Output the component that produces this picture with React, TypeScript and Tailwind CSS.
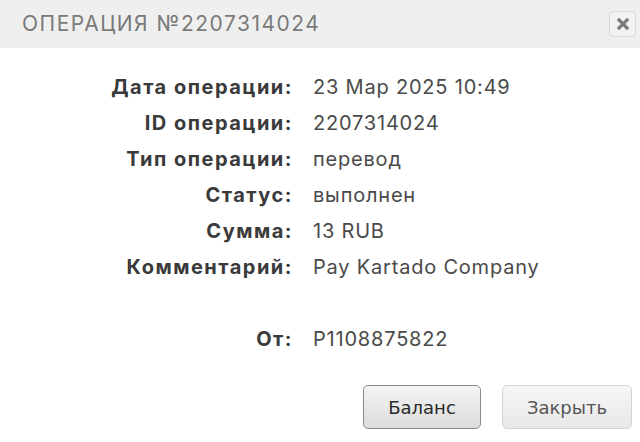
import React from "react";

const rows: [string, string][] = [
  ["Дата операции:", "23 Мар 2025 10:49"],
  ["ID операции:", "2207314024"],
  ["Тип операции:", "перевод"],
  ["Статус:", "выполнен"],
  ["Сумма:", "13 RUB"],
  ["Комментарий:", "Pay Kartado Company"],
];

function Row({ label, value }: { label: string; value: string }) {
  return (
    <div className="flex h-9 items-center">
      <div className="w-[293px] shrink-0 text-right font-bold tracking-[1.5px] text-[#3a3a3a]">{label}</div>
      <div className="ml-[20px] tracking-[0.8px] text-[#4a4a4a]">{value}</div>
    </div>
  );
}

export default function App() {
  return (
    <div className="w-[640px] h-[442px] bg-white flex flex-col" style={{ fontFamily: "Inter, 'DejaVu Sans', sans-serif" }}>
      <div className="h-12 bg-[#efefef] flex items-center justify-between pl-[22px] pr-[4px]">
        <div className="text-[21px] tracking-[1.5px] text-[#7a7a7a]">ОПЕРАЦИЯ №2207314024</div>
        <button className="w-[27px] h-[26px] rounded-[4px] border border-[#d8d8d8] bg-[#f2f2f2] flex items-center justify-center">
          <svg width="12" height="12" viewBox="0 0 12 12">
            <path d="M2 2 L10 10 M10 2 L2 10" stroke="#7a7a7a" strokeWidth="3.2" strokeLinecap="square" />
          </svg>
        </button>
      </div>
      <div className="pt-[21px] text-[20px]">
        {rows.map(([l, v]) => (
          <Row key={l} label={l} value={v} />
        ))}
        <div className="h-9" />
        <Row label="От:" value="P1108875822" />
      </div>
      <div className="mt-auto mb-[13px] flex justify-end gap-[21px] pr-[8px]" style={{ fontFamily: "'DejaVu Sans', sans-serif" }}>
        <button className="w-[118px] h-[44px] rounded-[5px] border border-[#8c8c8c] bg-gradient-to-b from-[#f4f4f4] to-[#dcdcdc] text-[18px] text-[#2a2a2a]">
          Баланс
        </button>
        <button className="w-[130px] h-[44px] rounded-[5px] border border-[#d4d4d4] bg-gradient-to-b from-[#f6f6f6] to-[#e8e8e8] text-[18px] text-[#555]">
          Закрыть
        </button>
      </div>
    </div>
  );
}
